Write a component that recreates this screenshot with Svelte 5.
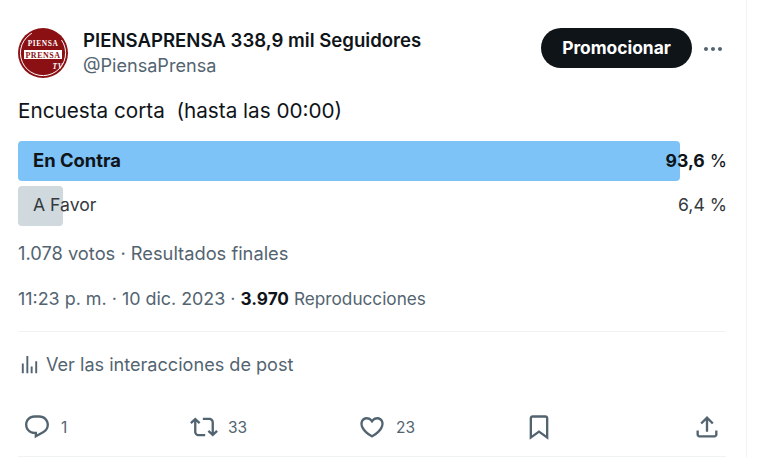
<script>
  const actions = [
    { d: 'M1.751 10c0-4.42 3.584-8 8.005-8h4.366c4.49 0 8.129 3.64 8.129 8.13 0 2.96-1.607 5.68-4.196 7.11l-8.054 4.46v-3.69h-.067c-4.49.1-8.183-3.51-8.183-8.01zm8.005-6c-3.317 0-6.005 2.69-6.005 6 0 3.37 2.77 6.08 6.138 6.01l.351-.01h1.761v2.3l5.087-2.81c1.951-1.08 3.163-3.13 3.163-5.36 0-3.39-2.744-6.13-6.129-6.13H9.756z', n: '1', w: 167 },
    { d: 'M4.5 3.88l4.432 4.14-1.364 1.46L5.5 7.55V16c0 1.1.896 2 2 2H13v2H7.5c-2.209 0-4-1.79-4-4V7.55L1.432 9.48.068 8.02 4.5 3.88zM16.5 6H11V4h5.5c2.209 0 4 1.79 4 4v8.45l2.068-1.93 1.364 1.46-4.432 4.14-4.432-4.14 1.364-1.46 2.068 1.93V8c0-1.1-.896-2-2-2z', n: '33', w: 168 },
    { d: 'M16.697 5.5c-1.222-.06-2.679.51-3.89 2.16l-.805 1.09-.806-1.09C9.984 6.01 8.526 5.44 7.304 5.5c-1.243.07-2.349.78-2.91 1.91-.552 1.12-.633 2.78.479 4.82 1.074 1.97 3.257 4.27 7.129 6.61 3.87-2.34 6.052-4.64 7.126-6.61 1.111-2.04 1.03-3.7.477-4.82-.561-1.13-1.666-1.84-2.908-1.91zm4.187 7.69c-1.351 2.48-4.001 5.12-8.379 7.67l-.503.3-.504-.3c-4.379-2.55-7.029-5.19-8.382-7.67-1.36-2.5-1.41-4.86-.514-6.67.887-1.79 2.647-2.91 4.601-3.01 1.651-.09 3.368.56 4.798 2.01 1.429-1.45 3.146-2.1 4.796-2.01 1.954.1 3.714 1.22 4.601 3.01.896 1.81.846 4.17-.514 6.67z', n: '23', w: 166.5 },
    { d: 'M4 4.5C4 3.12 5.119 2 6.5 2h11C18.881 2 20 3.12 20 4.5v18.44l-8-5.71-8 5.71V4.5zM6.5 4c-.276 0-.5.22-.5.5v14.56l6-4.29 6 4.29V4.5c0-.28-.224-.5-.5-.5h-11z', n: '', w: 166 }
  ];
  const share = 'M12 2.59l5.7 5.7-1.41 1.42L13 6.41V16h-2V6.41l-3.3 3.3-1.41-1.42L12 2.59zM21 15l-.02 3.51c0 1.38-1.12 2.49-2.5 2.49H5.5C4.11 21 3 19.88 3 18.5V15h2v3.5c0 .28.22.5.5.5h12.98c.28 0 .5-.22.5-.5L19 15h2z';
</script>

<main class="tweet">
  <header class="head">
    <svg class="avatar" viewBox="0 0 50 50" aria-hidden="true">
      <circle cx="25" cy="25" r="25" fill="#8b1014" />
      <circle cx="25" cy="25" r="22.6" fill="none" stroke="#fff" stroke-width="0.9" stroke-dasharray="108 34" transform="rotate(-35 25 25)" />
      <text x="25" y="18" class="logo">PIENSA</text>
      <rect x="6" y="22" width="38" height="9" fill="#fff" />
      <text x="25" y="29.5" class="logo dark">PRENSA</text>
      <text x="40" y="41" class="logo tv">TV</text>
    </svg>
    <div class="who">
      <div class="name">PIENSAPRENSA 338,9 mil Seguidores</div>
      <div class="handle">@PiensaPrensa</div>
    </div>
    <button class="promote">Promocionar</button>
    <svg class="dots" viewBox="0 0 24 24" aria-hidden="true"><path d="M3 12c0-1.1.9-2 2-2s2 .9 2 2-.9 2-2 2-2-.9-2-2zm9 2c1.1 0 2-.9 2-2s-.9-2-2-2-2 .9-2 2 .9 2 2 2zm7 0c1.1 0 2-.9 2-2s-.9-2-2-2-2 .9-2 2 .9 2 2 2z" /></svg>
  </header>

  <p class="title">Encuesta corta&nbsp; (hasta las 00:00)</p>

  <section class="poll">
    <div class="row win">
      <div class="bar" style="width: 662px"></div>
      <span class="label">En Contra</span>
      <span class="pct"><b>93,6</b> %</span>
    </div>
    <div class="row">
      <div class="bar" style="width: 45px"></div>
      <span class="label">A Favor</span>
      <span class="pct">6,4 %</span>
    </div>
  </section>

  <p class="votes">1.078 votos · Resultados finales</p>

  <p class="meta">11:23 p. m. · 10 dic. 2023 · <b>3.970</b> <span class="small">Reproducciones</span></p>

  <div class="engage">
    <svg viewBox="0 0 24 24" aria-hidden="true"><path d="M8.75 21V3h2v18h-2zM18 21V8.5h2V21h-2zM4 21l.004-10h2L6 21H4zm9.248 0v-7h2v7h-2z" /></svg>
    <span>Ver las interacciones de post</span>
  </div>

  <footer class="actions">
    {#each actions as a}
      <div class="action" style="width: {a.w}px">
        <svg viewBox="0 0 24 24" aria-hidden="true"><path d={a.d} /></svg>
        {#if a.n}<span>{a.n}</span>{/if}
      </div>
    {/each}
    <svg class="share" viewBox="0 0 24 24" aria-hidden="true"><path d={share} /></svg>
  </footer>
</main>

<style>
  :global(body) { margin: 0; background: #fff; }
  .tweet {
    box-sizing: border-box;
    width: 747px;
    height: 457px;
    padding: 28px 20px 0 18px;
    border-right: 1px solid #eff3f4;
    font-family: Inter, "Liberation Sans", sans-serif;
    color: #0f1419;
    position: relative;
  }
  .tweet::after {
    content: "";
    position: absolute;
    left: 18px;
    right: 20px;
    bottom: 0;
    height: 1px;
    background: #eff3f4;
  }
  p { margin: 0; }
  .head { display: flex; align-items: flex-start; height: 50px; }
  .avatar { width: 50px; height: 50px; flex: none; }
  .logo { font: 700 7.4px "Liberation Serif", serif; fill: #fff; text-anchor: middle; letter-spacing: 0.6px; }
  .dark { fill: #8b1014; font-size: 8px; letter-spacing: 0.5px; }
  .tv { font-style: italic; font-size: 7.5px; }
  .who { margin-left: 15px; flex: 1; }
  .name { font-size: 18.6px; font-weight: 600; line-height: 22px; margin-top: 1px; white-space: nowrap; }
  .handle { font-size: 18.1px; line-height: 22px; margin-top: 3px; color: #536471; }
  .promote {
    width: 151px;
    height: 40px;
    border: 0;
    border-radius: 20px;
    background: #0f1419;
    color: #fff;
    font: 700 17.4px Inter, sans-serif;
    padding: 0 0 1px;
    flex: none;
  }
  .dots { width: 24px; height: 24px; margin: 9px 1px 0 9px; fill: #536471; flex: none; }
  .title { margin-top: 21px; font-size: 20.7px; line-height: 24px; }
  .poll { margin-top: 18px; display: flex; flex-direction: column; gap: 5px; }
  .row {
    position: relative;
    box-sizing: border-box;
    height: 40px;
    padding-bottom: 3px;
    display: flex;
    align-items: center;
    justify-content: space-between;
    font-size: 17.6px;
  }
  .row.win { padding-bottom: 2px; }
  .bar { position: absolute; left: 0; top: 0; bottom: 0; border-radius: 4px; background: #cfd9de; }
  .win .bar { background: #7dc3f8; }
  .label { position: relative; margin-left: 15px; color: #36393d; }
  .win .label { font-weight: 700; color: #0f1419; font-size: 18.4px; }
  .pct { position: relative; right: -1px; color: #36393d; }
  .win .pct { color: #0f1419; }
  .votes { margin-top: 15px; font-size: 18.3px; line-height: 24px; color: #536471; }
  .meta { margin-top: 22px; font-size: 17.9px; line-height: 24px; color: #536471; }
  .meta b { color: #0f1419; font-weight: 700; font-size: 17.2px; }
  .small { font-size: 17.2px; }
  .engage {
    margin-top: 20px;
    border-top: 1px solid #eff3f4;
    padding-top: 20px;
    display: flex;
    align-items: center;
    gap: 5px;
    height: 24px;
    font-size: 18.1px;
    color: #536471;
  }
  .engage svg { width: 23px; height: 23px; fill: #536471; }
  .actions { margin-top: 37px; padding-left: 5px; display: flex; align-items: center; height: 28px; }
  .action { display: flex; align-items: center; gap: 10px; font-size: 15.5px; color: #536471; flex: none; }
  .action svg { width: 28px; height: 28px; fill: #536471; flex: none; }
  .share { width: 28px; height: 28px; fill: #536471; margin-left: auto; margin-right: 5.5px; }
</style>
